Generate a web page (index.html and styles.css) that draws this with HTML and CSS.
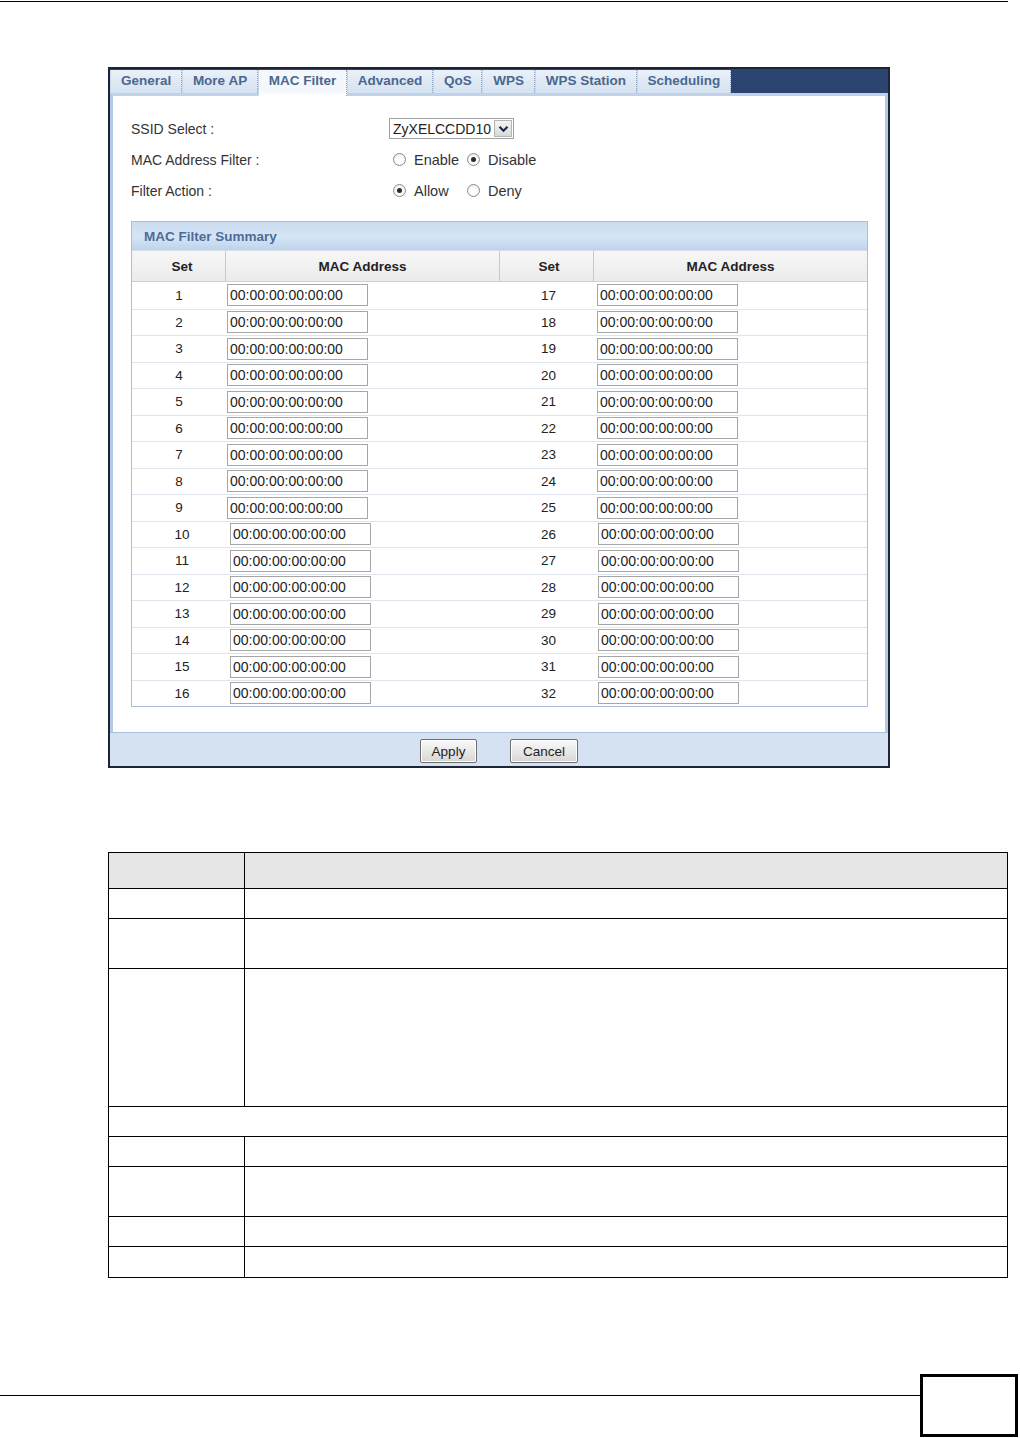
FILE: index.html
```html
<!DOCTYPE html>
<html>
<head>
<meta charset="utf-8">
<title>MAC Filter</title>
<link rel="stylesheet" href="styles.css">
</head>
<body>
<div class="top-rule"></div>

<div class="frame">
  <div class="tabbar">
    <div class="tab">General</div>
    <div class="tab">More AP</div>
    <div class="tab active">MAC Filter</div>
    <div class="tab">Advanced</div>
    <div class="tab">QoS</div>
    <div class="tab">WPS</div>
    <div class="tab">WPS Station</div>
    <div class="tab">Scheduling</div>
  </div>

  <div class="content">
    <div class="form-row">
      <div class="label">SSID Select :</div>
      <div class="value">
        <div class="select">
          <span class="select-text">ZyXELCCDD10</span>
          <span class="select-btn"><svg width="11" height="8" viewBox="0 0 11 8"><path d="M1.5 1.8 L5.5 5.8 L9.5 1.8" fill="none" stroke="#1f2a44" stroke-width="2.2"/></svg></span>
        </div>
      </div>
    </div>
    <div class="form-row">
      <div class="label">MAC Address Filter :</div>
      <div class="value">
        <span class="opt"><span class="radio"></span><span class="opt-text">Enable</span></span>
        <span class="opt"><span class="radio on"></span><span class="opt-text">Disable</span></span>
      </div>
    </div>
    <div class="form-row">
      <div class="label">Filter Action :</div>
      <div class="value">
        <span class="opt"><span class="radio on"></span><span class="opt-text">Allow</span></span>
        <span class="opt"><span class="radio"></span><span class="opt-text">Deny</span></span>
      </div>
    </div>

    <div class="summary">
      <div class="summary-title">MAC Filter Summary</div>
      <div class="row head"><div class="set">Set</div><div>MAC Address</div><div class="set">Set</div><div>MAC Address</div></div>
      <div class="row lo"><div class="set">1</div><div class="mac"><span class="input">00:00:00:00:00:00</span></div><div class="set">17</div><div class="mac"><span class="input">00:00:00:00:00:00</span></div></div>
      <div class="row lo"><div class="set">2</div><div class="mac"><span class="input">00:00:00:00:00:00</span></div><div class="set">18</div><div class="mac"><span class="input">00:00:00:00:00:00</span></div></div>
      <div class="row lo"><div class="set">3</div><div class="mac"><span class="input">00:00:00:00:00:00</span></div><div class="set">19</div><div class="mac"><span class="input">00:00:00:00:00:00</span></div></div>
      <div class="row lo"><div class="set">4</div><div class="mac"><span class="input">00:00:00:00:00:00</span></div><div class="set">20</div><div class="mac"><span class="input">00:00:00:00:00:00</span></div></div>
      <div class="row lo"><div class="set">5</div><div class="mac"><span class="input">00:00:00:00:00:00</span></div><div class="set">21</div><div class="mac"><span class="input">00:00:00:00:00:00</span></div></div>
      <div class="row lo"><div class="set">6</div><div class="mac"><span class="input">00:00:00:00:00:00</span></div><div class="set">22</div><div class="mac"><span class="input">00:00:00:00:00:00</span></div></div>
      <div class="row lo"><div class="set">7</div><div class="mac"><span class="input">00:00:00:00:00:00</span></div><div class="set">23</div><div class="mac"><span class="input">00:00:00:00:00:00</span></div></div>
      <div class="row lo"><div class="set">8</div><div class="mac"><span class="input">00:00:00:00:00:00</span></div><div class="set">24</div><div class="mac"><span class="input">00:00:00:00:00:00</span></div></div>
      <div class="row lo"><div class="set">9</div><div class="mac"><span class="input">00:00:00:00:00:00</span></div><div class="set">25</div><div class="mac"><span class="input">00:00:00:00:00:00</span></div></div>
      <div class="row"><div class="set">10</div><div class="mac"><span class="input">00:00:00:00:00:00</span></div><div class="set">26</div><div class="mac"><span class="input">00:00:00:00:00:00</span></div></div>
      <div class="row"><div class="set">11</div><div class="mac"><span class="input">00:00:00:00:00:00</span></div><div class="set">27</div><div class="mac"><span class="input">00:00:00:00:00:00</span></div></div>
      <div class="row"><div class="set">12</div><div class="mac"><span class="input">00:00:00:00:00:00</span></div><div class="set">28</div><div class="mac"><span class="input">00:00:00:00:00:00</span></div></div>
      <div class="row"><div class="set">13</div><div class="mac"><span class="input">00:00:00:00:00:00</span></div><div class="set">29</div><div class="mac"><span class="input">00:00:00:00:00:00</span></div></div>
      <div class="row"><div class="set">14</div><div class="mac"><span class="input">00:00:00:00:00:00</span></div><div class="set">30</div><div class="mac"><span class="input">00:00:00:00:00:00</span></div></div>
      <div class="row"><div class="set">15</div><div class="mac"><span class="input">00:00:00:00:00:00</span></div><div class="set">31</div><div class="mac"><span class="input">00:00:00:00:00:00</span></div></div>
      <div class="row"><div class="set">16</div><div class="mac"><span class="input">00:00:00:00:00:00</span></div><div class="set">32</div><div class="mac"><span class="input">00:00:00:00:00:00</span></div></div>
    </div>
  </div>

  <div class="footer">
    <span class="btn apply">Apply</span>
    <span class="btn cancel">Cancel</span>
  </div>
</div>

<table class="desc">
  <tr class="h36 th"><td class="c1"></td><td></td></tr>
  <tr class="h30"><td class="c1"></td><td></td></tr>
  <tr class="h50"><td class="c1"></td><td></td></tr>
  <tr class="h138"><td class="c1"></td><td></td></tr>
  <tr class="h30"><td colspan="2"></td></tr>
  <tr class="h30"><td class="c1"></td><td></td></tr>
  <tr class="h50"><td class="c1"></td><td></td></tr>
  <tr class="h30"><td class="c1"></td><td></td></tr>
  <tr class="h31"><td class="c1"></td><td></td></tr>
</table>

<div class="pagefoot">
  <div class="foot-rule"></div>
  <div class="pagebox"></div>
</div>
</body>
</html>
```

FILE: styles.css
```css
* { box-sizing: border-box; }

body {
  margin: 0;
  background: #fff;
  color: #222;
  font-family: "Liberation Sans", Arial, sans-serif;
}

.top-rule {
  width: 1008px;
  height: 1px;
  margin-top: 1px;
  background: #000;
}

/* ---------- screenshot frame ---------- */
.frame {
  width: 782px;
  margin: 65px 0 0 108px;
  border: 2px solid #1c2438;
}

.tabbar {
  height: 24px;
  display: flex;
  align-items: flex-start;
  background: #2c4470;
}

.tab {
  height: 23px;
  margin-top: 1px;
  padding: 0 9.6px 0 10px;
  line-height: 21px;
  font-size: 13.5px;
  font-weight: bold;
  color: #4b6790;
  background: linear-gradient(#eaf1f9, #d5e2f0);
  border-right: 1px dotted #8fa4c0;
  border-left: 1px solid #c7d6e8;
  white-space: nowrap;
}

.tab.active {
  position: relative;
  z-index: 1;
  height: 26px;
  background: linear-gradient(#f4f8fc, #f4f8fc 80%, #ffffff);
}

.content {
  background: #fff;
  border-top: 3px solid #bfd2ea;
  border-left: 3px solid #b3cae5;
  border-right: 3px solid #b3cae5;
  padding: 17px 0 25px 18px;
}

.form-row {
  height: 31px;
  display: flex;
  align-items: center;
}

.label {
  width: 258px;
  font-size: 14px;
  color: #333;
}

.value {
  display: flex;
  align-items: center;
}

.select {
  width: 125px;
  height: 21px;
  display: flex;
  align-items: center;
  justify-content: space-between;
  padding: 0 1px 0 3px;
  border: 1px solid #a3a3a3;
  background: #fff;
}

.select-text {
  font-size: 14px;
  color: #222;
}

.select-btn {
  width: 18px;
  height: 17px;
  display: flex;
  align-items: center;
  justify-content: center;
  border: 1px solid #b5b5b5;
  background: linear-gradient(#f5f5f5, #d9d9d9);
}

.opt {
  display: flex;
  align-items: center;
  width: 74px;
  padding-left: 4px;
}

.radio {
  width: 13px;
  height: 13px;
  border-radius: 50%;
  border: 1px solid #8c8c8c;
  background: radial-gradient(circle at 50% 60%, #ffffff 30%, #e4e4e4 100%);
  display: grid;
  place-items: center;
  flex: none;
}

.radio.on::after {
  content: "";
  width: 5px;
  height: 5px;
  border-radius: 50%;
  background: #2b2b2b;
}

.opt-text {
  margin-left: 8px;
  font-size: 14.5px;
  color: #333;
  white-space: nowrap;
}

/* ---------- summary table ---------- */
.summary {
  margin-top: 15px;
  width: 737px;
  border: 1px solid #a8c0dd;
}

.summary-title {
  height: 28px;
  display: flex;
  align-items: center;
  padding-left: 12px;
  font-size: 13.5px;
  font-weight: bold;
  color: #4d6b99;
  background: linear-gradient(#cadcf0, #d6e4f4 55%, #bdd3ec);
}

.row {
  display: grid;
  grid-template-columns: 93px 274px 94px 274px;
  height: 26.5px;
  border-top: 1px solid #dde4ed;
}

.row > div {
  display: flex;
  align-items: center;
}

.row.head {
  height: 32px;
  border-top: 1px solid #d7dde5;
  border-bottom: 1px solid #d0d0d0;
  background: linear-gradient(#f7f7f7, #ebebeb);
  font-size: 13.5px;
  font-weight: bold;
  color: #222;
}

.row.head > div {
  justify-content: center;
}

.row.head > div + div {
  border-left: 1px solid #c9c9c9;
}

.row.head + .row {
  border-top: 0;
}

.set {
  justify-content: center;
  font-size: 13.5px;
  color: #222;
}

.row .set:first-child {
  padding-left: 7px;
}

.row.lo .set:first-child {
  padding-left: 1px;
}

.row .set:nth-child(3) {
  padding-left: 5px;
}

.mac {
  padding-left: 5px;
}

.row.lo .mac:nth-child(2) {
  padding-left: 2px;
}

.row.lo .mac:nth-child(4) {
  padding-left: 4px;
}

.input {
  width: 141px;
  height: 22px;
  display: flex;
  align-items: center;
  padding-left: 2px;
  border: 1px solid #a6a6a6;
  font-size: 14px;
  color: #222;
  background: #fff;
}

/* ---------- footer bar ---------- */
.footer {
  height: 34px;
  display: flex;
  justify-content: center;
  align-items: flex-start;
  gap: 33px;
  padding-top: 6px;
  border-top: 1px solid #a9bfdb;
  background: #d4e2f1;
}

.btn {
  height: 24px;
  display: flex;
  align-items: center;
  justify-content: center;
  font-size: 13.5px;
  color: #222;
  border: 1px solid #6e6e6e;
  border-radius: 2px;
  background: linear-gradient(#fbfbfb, #e8e8e8 50%, #d6d6d6);
  box-shadow: inset 0 0 0 1px #ffffff;
}

.apply { width: 57px; }
.cancel { width: 68px; }

/* ---------- description table ---------- */
.desc {
  margin: 84px 0 0 108px;
  width: 900px;
  border-collapse: collapse;
}

.desc td {
  border: 1px solid #000;
  padding: 0;
}

.desc td.c1 { width: 136px; }

.desc tr.th td { background: #e6e6e6; }

.h36 { height: 36px; }
.h30 { height: 30px; }
.h31 { height: 31px; }
.h50 { height: 50px; }
.h138 { height: 138px; }

/* ---------- page footer ---------- */
.pagefoot {
  display: flex;
  align-items: flex-start;
  margin-top: 96px;
}

.foot-rule {
  width: 920px;
  height: 1px;
  margin-top: 21px;
  background: #000;
}

.pagebox {
  width: 98px;
  height: 63px;
  border: 3px solid #000;
}
```
